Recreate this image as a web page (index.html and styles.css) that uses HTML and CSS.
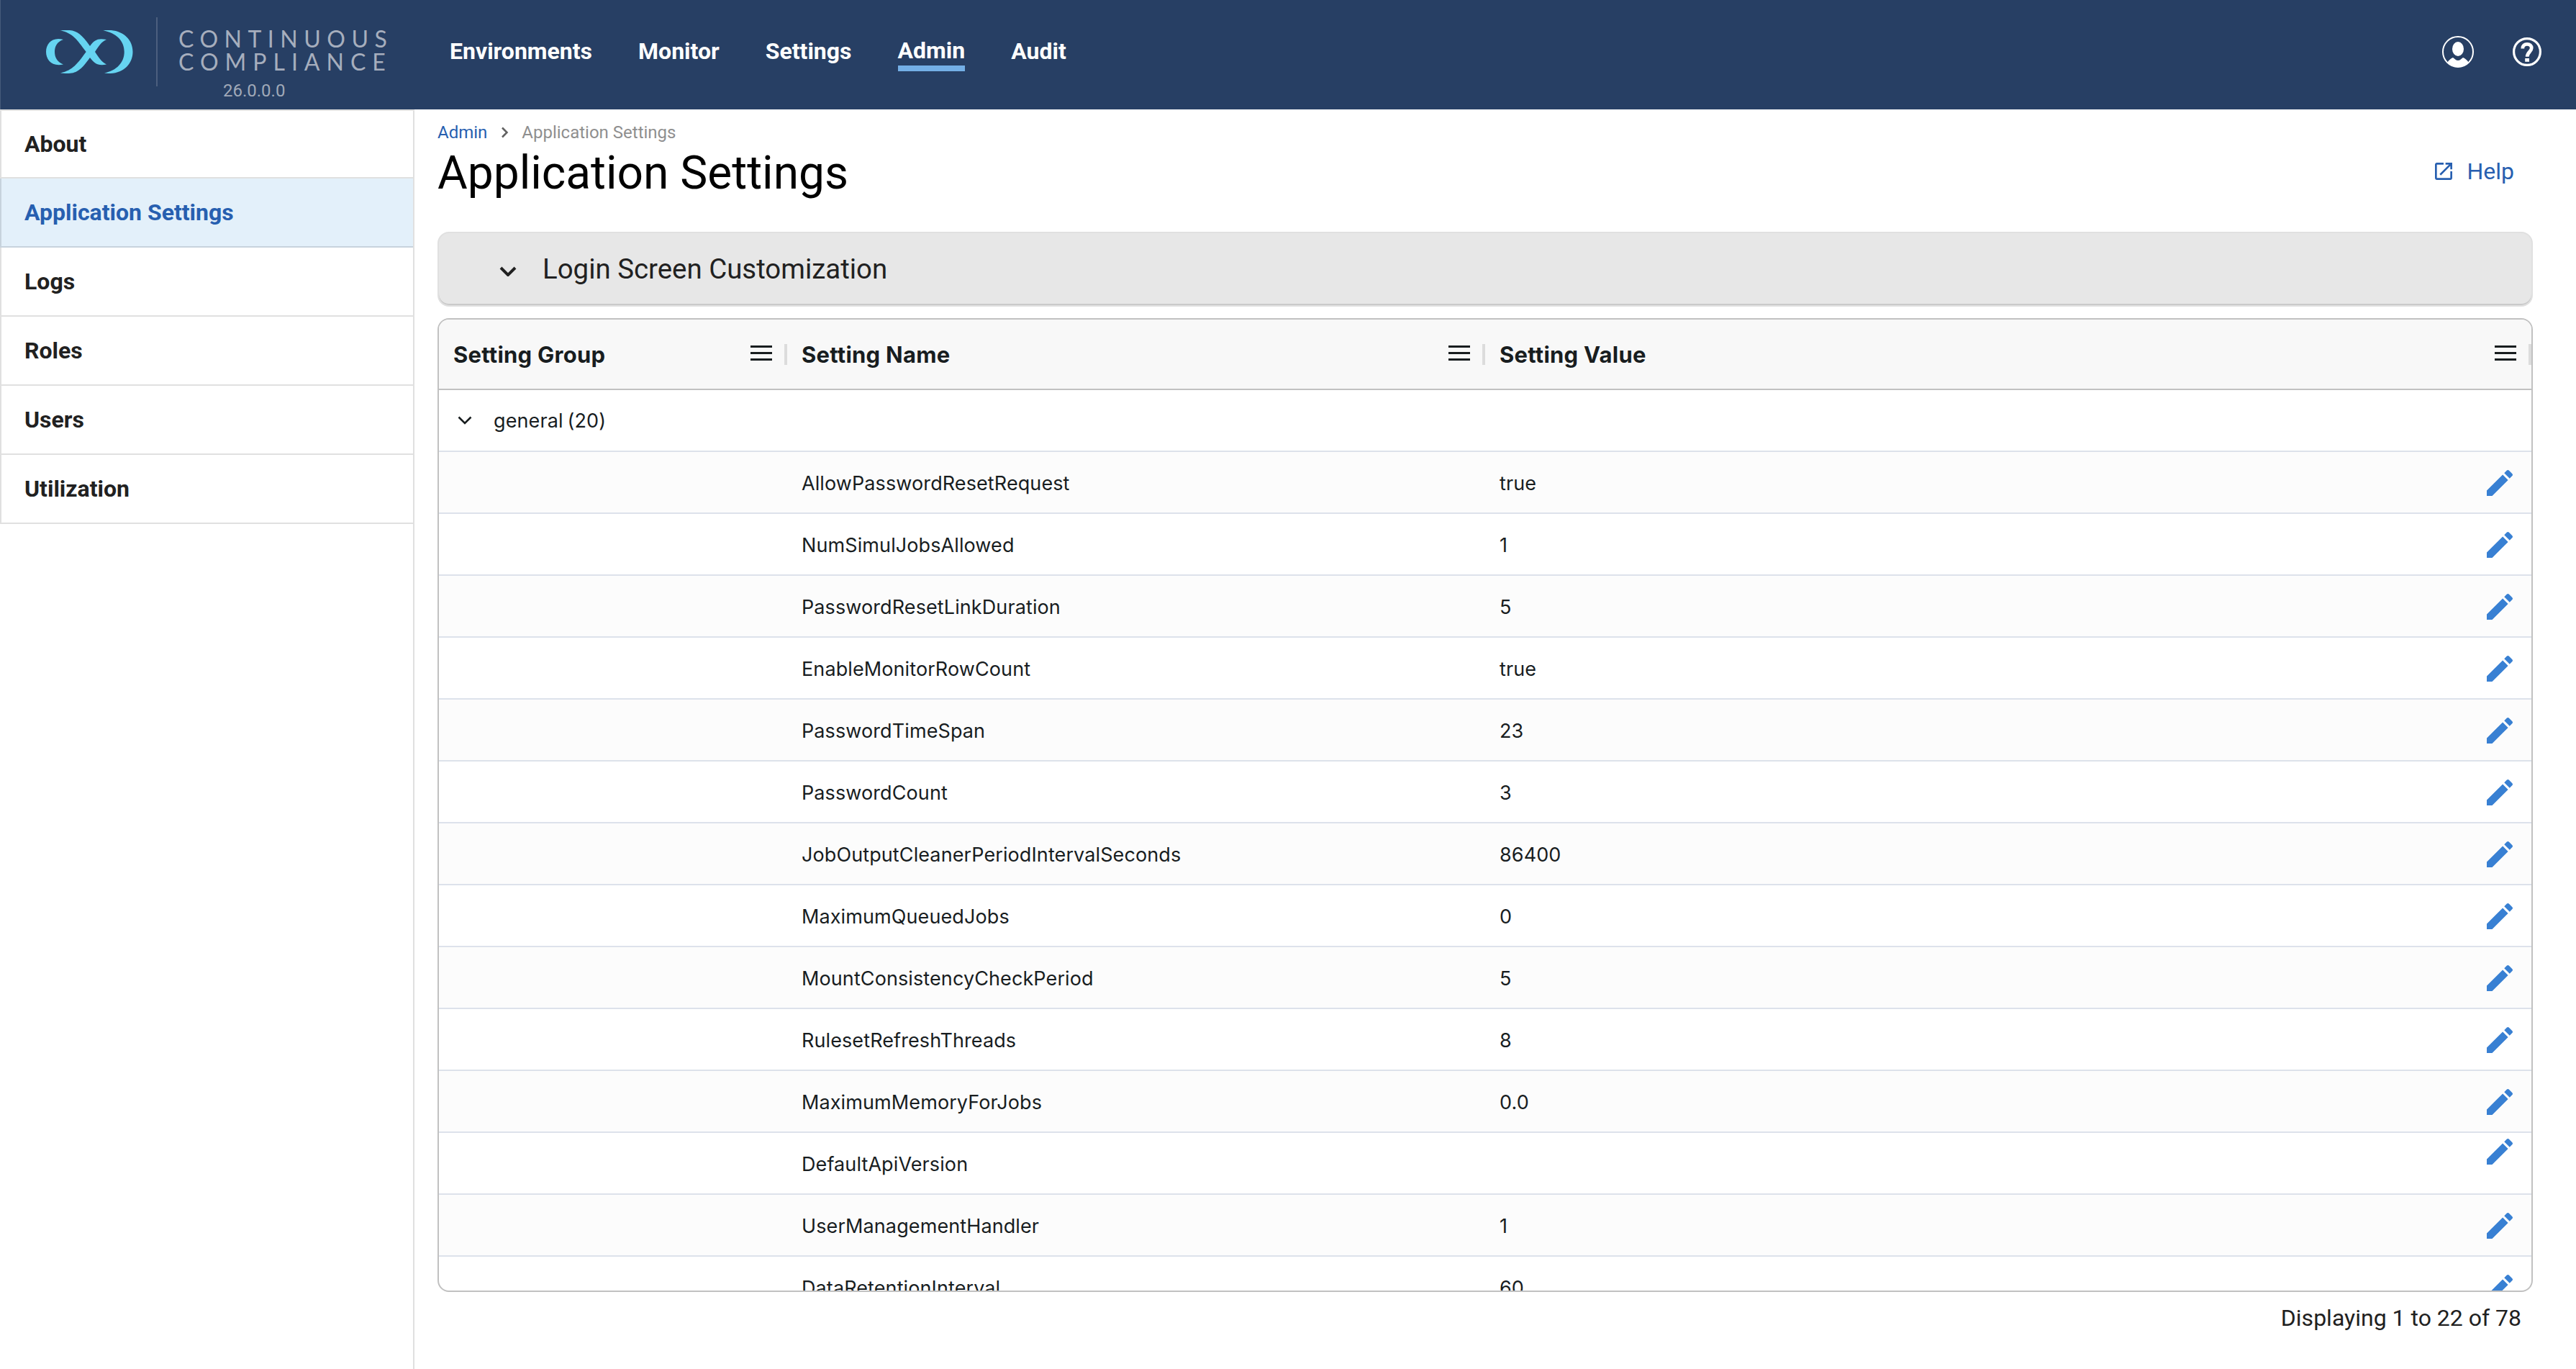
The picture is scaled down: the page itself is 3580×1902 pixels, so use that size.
FILE: index.html
```
<!DOCTYPE html>
<html lang="en">
<head>
  <meta charset="UTF-8" />
  <meta name="viewport" content="width=device-width, initial-scale=1" />
  <title>Continuous Compliance - Application Settings</title>
  <link rel="stylesheet" href="styles.css">
</head>
<body>
  <!-- Shared icons -->
  <svg class="icon-defs" xmlns="http://www.w3.org/2000/svg">
    <symbol id="icon-edit" viewBox="0 0 24 24">
      <path d="M3 17.25V21h3.75L17.81 9.94l-3.75-3.75L3 17.25zM20.71 7.04c.39-.39.39-1.02 0-1.41l-2.34-2.34c-.39-.39-1.02-.39-1.41 0l-1.83 1.83 3.75 3.75 1.83-1.83z"/>
    </symbol>
    <symbol id="icon-menu" viewBox="0 0 30 21">
      <path d="M0 0h30v3H0zM0 9h30v3H0zM0 18h30v3H0z"/>
    </symbol>
  </svg>

  <header class="topbar">
    <div class="brand">
      <svg class="brand-logo" viewBox="0 0 122 60">
        <path d="M24 13 C8 9 0 19 0 30 C0 41 8 51 24 47.500 C15 44 12 37 12 30 C12 23 15 16 24 13 Z"/>
        <path d="M19.500 0.300 C40 -1.500 46 1 61 22 C67 13.500 72 10.500 84 13 C77 16 74 21 68 30 C74 39 77 44 84 47.500 C72 50 67 46 61 38 C46 59 40 61.500 20 59.500 C38 55 43 47 55.700 30 C42 12 37 4 19.500 0.300 Z"/>
        <path d="M79 0.300 C104 -3 120.500 11 120.500 30 C120.500 49 104 63 81 59.500 C98 56 108.700 45 108.700 30 C108.700 15 98 4 79 0.300 Z"/>
      </svg>
      <div class="brand-text">
        <span class="brand-name">CONTINUOUS</span>
        <span class="brand-name brand-name-2">COMPLIANCE</span>
        <span class="brand-version">26.0.0.0</span>
      </div>
    </div>
    <nav class="main-nav">
      <a>Environments</a>
      <a>Monitor</a>
      <a>Settings</a>
      <a class="active">Admin</a>
      <a>Audit</a>
    </nav>
    <div class="topbar-icons">
      <svg class="icon-user" viewBox="0 0 44 44">
        <circle cx="22" cy="22" r="21" fill="none" stroke="#fff" stroke-width="2"/>
        <ellipse cx="22" cy="18" rx="8" ry="10"/>
        <path d="M7 37 C10 33 12 31 15 30 C18 32 19 34 22 34 C25 34 26 32 29 30 C32 31 34 33 37 37 A21 21 0 0 1 7 37 Z"/>
      </svg>
      <svg class="icon-help" viewBox="2 2 20 20">
        <circle cx="12" cy="12" r="9.200"/>
        <path class="mark" d="M8.900 9.700 C8.900 7.700 10.300 6.700 12 6.700 C13.900 6.700 15.100 7.800 15.100 9.400 C15.100 11.900 12.100 12.200 12.100 15.400"/>
        <path class="dot" d="M10.600 16.500h2.900v2.400h-2.900z"/>
      </svg>
    </div>
  </header>

  <div class="layout">
    <aside class="sidebar">
      <a>About</a>
      <a class="selected">Application Settings</a>
      <a>Logs</a>
      <a>Roles</a>
      <a>Users</a>
      <a>Utilization</a>
    </aside>

    <main class="content">
      <div class="breadcrumb">
        <a>Admin</a>
        <svg class="crumb-arrow" viewBox="0 0 11 16"><path d="M2 1.500 L8.500 8 L2 14.500"/></svg>
        <span>Application Settings</span>
      </div>
      <div class="title-row">
        <h1>Application Settings</h1>
        <a class="help-link">
          <svg viewBox="3 3 18 18"><path d="M19 19H5V5h7V3H5c-1.110 0-2 .9-2 2v14c0 1.100.89 2 2 2h14c1.100 0 2-.9 2-2v-7h-2v7zM14 3v2h3.590l-9.830 9.830 1.410 1.410L19 6.410V10h2V3h-7z"/></svg>
          <span>Help</span>
        </a>
      </div>

      <section class="accordion">
        <svg viewBox="0 0 24 14"><path d="M2 2 L12 12 L22 2"/></svg>
        <span>Login Screen Customization</span>
      </section>

      <section class="grid">
        <div class="grid-row grid-header">
          <div class="cell"><span>Setting Group</span><svg class="icon-menu"><use href="#icon-menu"/></svg></div>
          <div class="cell"><span>Setting Name</span><svg class="icon-menu"><use href="#icon-menu"/></svg></div>
          <div class="cell"><span>Setting Value</span><svg class="icon-menu"><use href="#icon-menu"/></svg></div>
        </div>
        <div class="grid-row group-row">
          <svg viewBox="0 0 20 12"><path d="M1.500 1.500 L10 10 L18.500 1.500"/></svg>
          <span>general</span><span class="group-count">(20)</span>
        </div>
        <div class="grid-row"><div class="cell"></div><div class="cell">AllowPasswordResetRequest</div><div class="cell">true<svg class="icon-edit"><use href="#icon-edit"/></svg></div></div>
        <div class="grid-row"><div class="cell"></div><div class="cell">NumSimulJobsAllowed</div><div class="cell">1<svg class="icon-edit"><use href="#icon-edit"/></svg></div></div>
        <div class="grid-row"><div class="cell"></div><div class="cell">PasswordResetLinkDuration</div><div class="cell">5<svg class="icon-edit"><use href="#icon-edit"/></svg></div></div>
        <div class="grid-row"><div class="cell"></div><div class="cell">EnableMonitorRowCount</div><div class="cell">true<svg class="icon-edit"><use href="#icon-edit"/></svg></div></div>
        <div class="grid-row"><div class="cell"></div><div class="cell">PasswordTimeSpan</div><div class="cell">23<svg class="icon-edit"><use href="#icon-edit"/></svg></div></div>
        <div class="grid-row"><div class="cell"></div><div class="cell">PasswordCount</div><div class="cell">3<svg class="icon-edit"><use href="#icon-edit"/></svg></div></div>
        <div class="grid-row"><div class="cell"></div><div class="cell">JobOutputCleanerPeriodIntervalSeconds</div><div class="cell">86400<svg class="icon-edit"><use href="#icon-edit"/></svg></div></div>
        <div class="grid-row"><div class="cell"></div><div class="cell">MaximumQueuedJobs</div><div class="cell">0<svg class="icon-edit"><use href="#icon-edit"/></svg></div></div>
        <div class="grid-row"><div class="cell"></div><div class="cell">MountConsistencyCheckPeriod</div><div class="cell">5<svg class="icon-edit"><use href="#icon-edit"/></svg></div></div>
        <div class="grid-row"><div class="cell"></div><div class="cell">RulesetRefreshThreads</div><div class="cell">8<svg class="icon-edit"><use href="#icon-edit"/></svg></div></div>
        <div class="grid-row"><div class="cell"></div><div class="cell">MaximumMemoryForJobs</div><div class="cell">0.0<svg class="icon-edit"><use href="#icon-edit"/></svg></div></div>
        <div class="grid-row"><div class="cell"></div><div class="cell">DefaultApiVersion</div><div class="cell cell-empty"><svg class="icon-edit"><use href="#icon-edit"/></svg></div></div>
        <div class="grid-row"><div class="cell"></div><div class="cell">UserManagementHandler</div><div class="cell">1<svg class="icon-edit"><use href="#icon-edit"/></svg></div></div>
        <div class="grid-row"><div class="cell"></div><div class="cell">DataRetentionInterval</div><div class="cell">60<svg class="icon-edit"><use href="#icon-edit"/></svg></div></div>
      </section>

      <div class="grid-status">Displaying 1 to 22 of 78</div>
    </main>
  </div>
</body>
</html>
```
FILE: styles.css
```
* {
  box-sizing: border-box;
}
body {
  margin: 0;
  height: 1902px;
  display: flex;
  flex-direction: column;
  background: #fff;
  color: #212121;
  font-family: Roboto, sans-serif;
  font-size: 32px;
  overflow: hidden;
}
svg {
  display: block;
  flex: none;
}
.icon-defs {
  display: none;
}

/* Top bar */
.topbar {
  flex: none;
  display: flex;
  align-items: flex-start;
  height: 152px;
  background: #273f64;
  border-left: 1px solid #465b7b;
}
.brand {
  display: flex;
  flex: none;
  width: 622px;
  padding: 24px 0 0 63px;
}
.brand-logo {
  width: 122px;
  height: 60px;
  margin-top: 18px;
  fill: #66d4f1;
}
.brand-text {
  display: flex;
  flex-direction: column;
  height: 96px;
  margin-left: 31px;
  padding: 14px 0 0 29px;
  border-left: 2px solid #4c5f7e;
}
.brand-name {
  font-family: Lato, sans-serif;
  font-size: 32px;
  line-height: 32px;
  letter-spacing: 8.5px;
  color: #a6aebd;
}
.brand-name-2 {
  letter-spacing: 9px;
}
.brand-version {
  padding-left: 62px;
  font-size: 24px;
  line-height: 48px;
  color: #a0a9b8;
}
.main-nav {
  flex: 1;
  display: flex;
  gap: 64px;
  padding-top: 52px;
  padding-left: 2px;
}
.main-nav a {
  color: #fff;
  font-weight: 700;
  line-height: 38px;
}
.main-nav .active {
  height: 47px;
  line-height: 36px;
  border-bottom: 8px solid #74afe6;
}
.topbar-icons {
  display: flex;
  align-items: center;
  gap: 54px;
  padding: 50px 48px 0 0;
  fill: #fff;
}
.icon-user {
  width: 44px;
  height: 44px;
}
.icon-help {
  width: 40px;
  height: 40px;
}
.icon-help circle {
  fill: none;
  stroke: #fff;
  stroke-width: 1.6;
}
.icon-help .mark {
  fill: none;
  stroke: #fff;
  stroke-width: 2.4;
}

/* Side menu */
.layout {
  flex: 1;
  display: flex;
  min-height: 0;
}
.sidebar {
  width: 576px;
  border-top: 2px solid #e0e0e0;
  border-right: 2px solid #e0e0e0;
}
.sidebar a {
  display: block;
  height: 96px;
  padding-left: 32px;
  border-left: 2px solid #e0e0e0;
  border-bottom: 2px solid #e0e0e0;
  font-weight: 700;
  line-height: 94px;
}
.sidebar a:first-child {
  height: 94px;
  line-height: 92px;
}
.sidebar .selected {
  color: #275fb0;
  background: #e3f0fa;
  border-color: #c7d3dd;
}

/* Page content */
.content {
  flex: 1;
  padding: 16px 60px 0 32px;
}
.breadcrumb {
  display: flex;
  align-items: center;
  height: 32px;
  font-size: 24px;
  color: #8f8f8f;
}
.breadcrumb a {
  color: #275fb0;
}
.crumb-arrow {
  width: 11px;
  height: 16px;
  margin: 0 18px 0 19px;
}
.crumb-arrow path {
  fill: none;
  stroke: #616161;
  stroke-width: 2.5;
}
.title-row {
  display: flex;
  align-items: center;
  justify-content: space-between;
  height: 80px;
  padding-right: 26px;
}
h1 {
  margin: 0;
  padding-top: 1px;
  color: #000;
  font-size: 64px;
  font-weight: 400;
  line-height: 80px;
}
.help-link {
  display: flex;
  align-items: center;
  gap: 20px;
  margin-bottom: 5px;
  color: #275fb0;
  line-height: 38px;
}
.help-link svg {
  width: 24px;
  height: 24px;
  fill: #275fb0;
}
.accordion {
  display: flex;
  align-items: center;
  height: 104px;
  margin-top: 42px;
  padding: 0 0 2px 84px;
  border: 2px solid #e0e0e0;
  border-radius: 16px;
  background: #e7e7e7;
  box-shadow: inset 0 -2px 0 #cacaca;
  font-size: 38.4px;
}
.accordion svg {
  width: 24px;
  height: 14px;
  margin: 8px 36px 0 0;
}
.accordion span {
  padding-top: 1px;
}
.accordion path {
  fill: none;
  stroke: #212121;
  stroke-width: 4;
}

/* Settings grid */
.grid {
  height: 1353px;
  margin-top: 16px;
  border: 2px solid #c1c1c1;
  border-radius: 16px;
  overflow: hidden;
  color: #181d1f;
  font-family: Inter, sans-serif;
  font-size: 27px;
  letter-spacing: 0.1px;
}
.grid-row {
  display: grid;
  grid-template-columns: 484px 970px 1454px;
  height: 86px;
  border-bottom: 2px solid #dde2eb;
  line-height: 88px;
}
.grid-row:nth-child(odd) {
  background: #fcfcfc;
}
.cell {
  display: flex;
  align-items: flex-start;
  justify-content: space-between;
  height: 84px;
  padding: 0 20px;
}
.grid .grid-header {
  height: 98px;
  background: #f8f8f8;
  border-bottom-color: #c1c1c1;
  font-size: 31px;
  font-weight: 700;
  line-height: 98px;
  letter-spacing: 0.25px;
}
.grid-header .cell {
  align-items: center;
  height: 29px;
  margin-top: 34px;
  border-right: 4px solid #dcdcdc;
  padding-right: 17px;
}
.icon-menu {
  width: 30px;
  height: 21px;
  margin-bottom: 4px;
  fill: #181d1f;
}
.grid .group-row {
  display: flex;
  align-items: center;
  padding-left: 26px;
  background: #fff;
}
.group-row svg {
  width: 20px;
  height: 12px;
  margin-right: 30px;
}
.group-row span {
  padding-top: 2px;
}
.group-row path {
  fill: none;
  stroke: #181d1f;
  stroke-width: 2.6;
}
.group-count {
  margin-left: 6px;
}
.icon-edit {
  width: 48px;
  height: 48px;
  margin-top: 19px;
  fill: #3880d3;
}
.cell-empty {
  justify-content: flex-end;
}
.cell-empty .icon-edit {
  margin-top: 2px;
}
.grid-status {
  padding: 17px 16px 0 0;
  line-height: 38px;
  text-align: right;
}
```
